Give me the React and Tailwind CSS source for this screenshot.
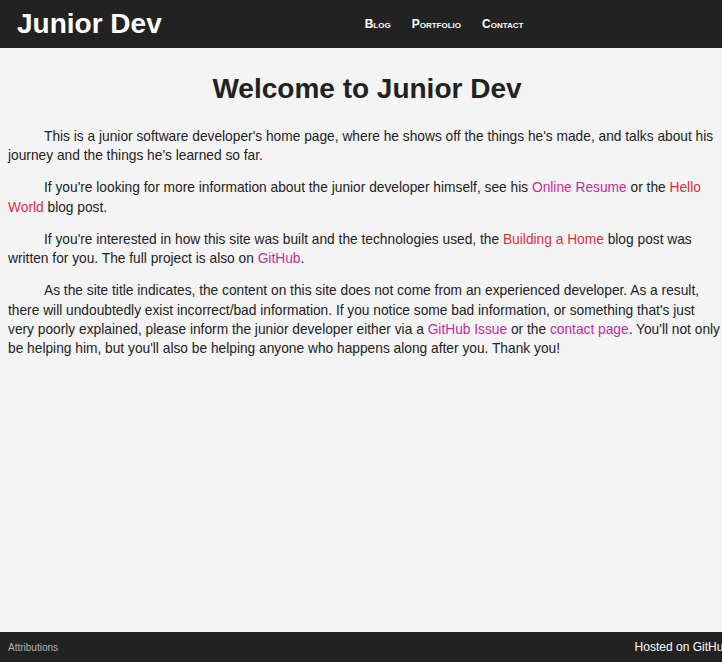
import React from 'react';

const Magenta = ({ children }) => (
    <a href="#" className="text-[#c52a9e]">{children}</a>
);

const Red = ({ children }) => (
    <a href="#" className="text-[#d7313e]">{children}</a>
);

const App = () => {
    return (
        <div className="w-full min-h-[662px] overflow-hidden bg-[#f4f4f4] font-['Liberation_Sans',Arial,sans-serif]">
            <div className="w-[734px] min-h-[662px] flex flex-col">
                {/* Header */}
                <header className="h-[48px] bg-[#222222] flex items-center">
                    <h1 className="pl-[17px] text-[28px] font-bold text-white leading-none">Junior Dev</h1>
                    <nav className="ml-[203px] flex gap-[21px] text-[12px] font-bold text-white [font-variant:small-caps]">
                        <a href="#">Blog</a>
                        <a href="#">Portfolio</a>
                        <a href="#">Contact</a>
                    </nav>
                </header>

                {/* Main */}
                <main className="flex-1 px-[8px] text-[13.76px] leading-[19.4px] text-[#222222]">
                    <h2 className="mt-[25px] mb-[22px] text-center text-[28px] font-bold leading-[32px]">
                        Welcome to Junior Dev
                    </h2>
                    <div className="mr-[3px]">
                        <p className="indent-[36px] mb-[12.6px]">
                            This is a junior software developer's home page, where he shows off the things he's made, and talks about his journey and the things he's learned so far.
                        </p>
                        <p className="indent-[36px] mb-[12.6px]">
                            If you're looking for more information about the junior developer himself, see his <Magenta>Online Resume</Magenta> or the <Red>Hello World</Red> blog post.
                        </p>
                        <p className="indent-[36px] mb-[12.6px]">
                            If you're interested in how this site was built and the technologies used, the <Red>Building a Home</Red> blog post was written for you. The full project is also on <Magenta>GitHub</Magenta>.
                        </p>
                        <p className="indent-[36px] mb-[12.6px]">
                            As the site title indicates, the content on this site does not come from an experienced developer. As a result, there will undoubtedly exist incorrect/bad information. If you notice some bad information, or something that's just very poorly explained, please inform the junior developer either via a <Magenta>GitHub Issue</Magenta> or the <Magenta>contact page</Magenta>. You'll not only be helping him, but you'll also be helping anyone who happens along after you. Thank you!
                        </p>
                    </div>
                </main>

                {/* Footer */}
                <footer className="h-[30px] bg-[#222222] flex items-center justify-between pl-[8px] pr-[4px]">
                    <a href="#" className="text-[10px] text-[#b4b4b4]">Attributions</a>
                    <span className="text-[12px] text-white">Hosted on GitHub</span>
                </footer>
            </div>
        </div>
    );
};

export default App;
